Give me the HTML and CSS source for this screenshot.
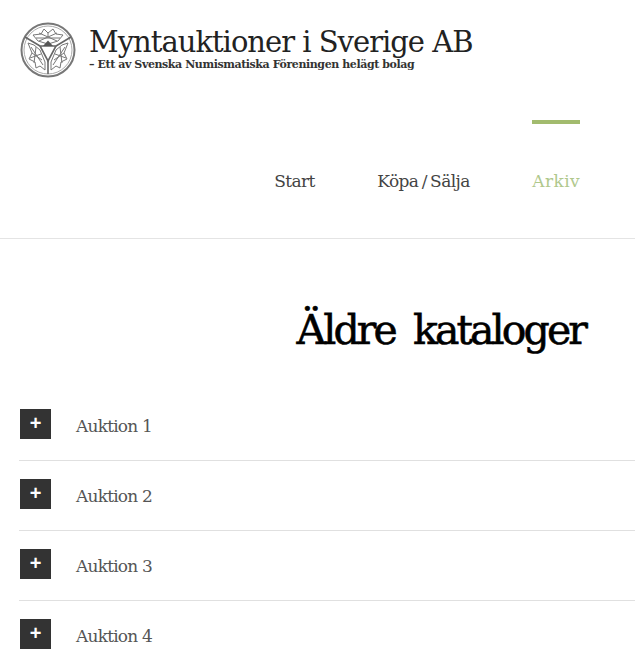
FILE: index.html
```html
<!DOCTYPE html>
<html lang="sv">
<head>
<meta charset="utf-8">
<title>Äldre kataloger</title>
<link rel="stylesheet" href="styles.css">
</head>
<body>
<header class="site-header">
  <a class="brand" href="#">
    <svg class="brand-mark" viewBox="0 0 56 56" aria-hidden="true">
      <circle cx="28" cy="28" r="26.5" fill="none" stroke="#777" stroke-width="2"/>
      <circle cx="28" cy="28" r="24" fill="none" stroke="#aaa" stroke-width="1"/>
      <g fill="none" stroke="#666" stroke-width="1.6">
        <path d="M5 15 L20 24 M51 15 L36 24 M28 52 L28 39"/>
        <path d="M20 24 H36 L28 39 Z"/>
      </g>
      <g fill="none" stroke="#777" stroke-width="1">
        <path d="M13 13 L21 12 L24 7 L28 11 L33 7 L36 12 L43 13 L38 19 L28 22 L18 19 Z"/>
        <path d="M19 11 L37 19 M37 11 L19 19 M28 11 V15 M16 16 H40"/>
        <path d="M8 21 L14 23 L20 28 L25 40 L25 48 L20 44 L16 46 L15 40 L9 37 L12 31 Z"/>
        <path d="M11 25 L23 43 M21 32 L10 36 M16 25 L14 41 M12 31 L22 38"/>
        <path d="M48 21 L42 23 L36 28 L31 40 L31 48 L36 44 L40 46 L41 40 L47 37 L44 31 Z"/>
        <path d="M45 25 L33 43 M35 32 L46 36 M40 25 L42 41 M44 31 L34 38"/>
      </g>
      <path d="M23 24 L28 18.500 L33 24 Z" fill="#555"/>
    </svg>
    <span class="brand-text">
      <span class="brand-name">Myntauktioner i Sverige AB</span>
      <span class="brand-tag">– Ett av Svenska Numismatiska Föreningen helägt bolag</span>
    </span>
  </a>
  <nav class="main-nav">
    <a class="nav-item" href="#">Start</a>
    <a class="nav-item nav-item-tight" href="#">Köpa / Sälja</a>
    <a class="nav-item is-active" href="#">Arkiv</a>
  </nav>
</header>
<main class="content">
  <h1 class="page-title">Äldre kataloger</h1>
  <ul class="accordion">
    <li class="accordion-row"><span class="toggle">+</span><span class="row-label">Auktion 1</span></li>
    <li class="accordion-row"><span class="toggle">+</span><span class="row-label">Auktion 2</span></li>
    <li class="accordion-row"><span class="toggle">+</span><span class="row-label">Auktion 3</span></li>
    <li class="accordion-row"><span class="toggle">+</span><span class="row-label">Auktion 4</span></li>
  </ul>
</main>
</body>
</html>
```
FILE: styles.css
```css
html, body {
  margin: 0;
  padding: 0;
  height: 100%;
  overflow: hidden;
  background: #fff;
}
body {
  font-family: "Liberation Serif", serif;
  color: #333;
}
a {
  color: inherit;
  text-decoration: none;
}
.site-header {
  height: 238px;
  border-bottom: 1px solid #e4e4e4;
  display: flex;
  flex-direction: column;
}
.brand {
  display: flex;
  align-items: flex-start;
  gap: 13px;
  padding: 22px 0 0 20px;
  height: 76px;
  color: #222;
}
.brand-mark {
  width: 56px;
  height: 56px;
  flex: none;
}
.brand-text {
  display: flex;
  flex-direction: column;
  padding-top: 3px;
}
.brand-name {
  font-family: "DejaVu Serif", serif;
  font-size: 29px;
  line-height: 34px;
  letter-spacing: -1px;
  white-space: nowrap;
}
.brand-tag {
  font-family: "DejaVu Serif", serif;
  font-size: 11px;
  font-weight: 700;
  line-height: 12px;
  letter-spacing: -0.41px;
  white-space: nowrap;
  color: #333;
}
.main-nav {
  display: flex;
  justify-content: flex-end;
  gap: 62.5px;
  padding: 0 55px 0 0;
  margin-top: 22px;
}
.nav-item {
  font-family: "DejaVu Serif", serif;
  font-size: 17px;
  line-height: 24px;
  letter-spacing: -0.6px;
  padding-top: 45px;
  border-top: 4px solid transparent;
  color: #444;
}
.nav-item-tight {
  word-spacing: -1.5px;
}
.nav-item.is-active {
  border-top-color: #a2bb6e;
  color: #b0c88c;
  letter-spacing: 0.4px;
}
.content {
  padding: 52px 0 0 19px;
}
.page-title {
  margin: 0 50px 22px 0;
  text-align: right;
  font-family: "DejaVu Serif", serif;
  font-size: 41px;
  line-height: 78px;
  font-weight: 400;
  letter-spacing: -2.9px;
  word-spacing: 8px;
  color: #000;
  -webkit-text-stroke: 0.6px #000;
}
.accordion {
  list-style: none;
  margin: 0;
  padding: 0;
}
.accordion-row {
  display: flex;
  align-items: flex-start;
  gap: 25px;
  padding: 18px 0 21px;
  height: 30px;
  border-bottom: 1px solid #e0e0e0;
}
.toggle {
  width: 31px;
  height: 30px;
  margin-left: 1px;
  background: #333;
  color: #fff;
  font-family: "Liberation Sans", sans-serif;
  font-size: 20px;
  font-weight: 700;
  line-height: 28px;
  text-align: center;
  flex: none;
}
.row-label {
  font-family: "DejaVu Serif", serif;
  font-size: 17px;
  line-height: 34px;
  letter-spacing: -0.8px;
  color: #555;
}
```
